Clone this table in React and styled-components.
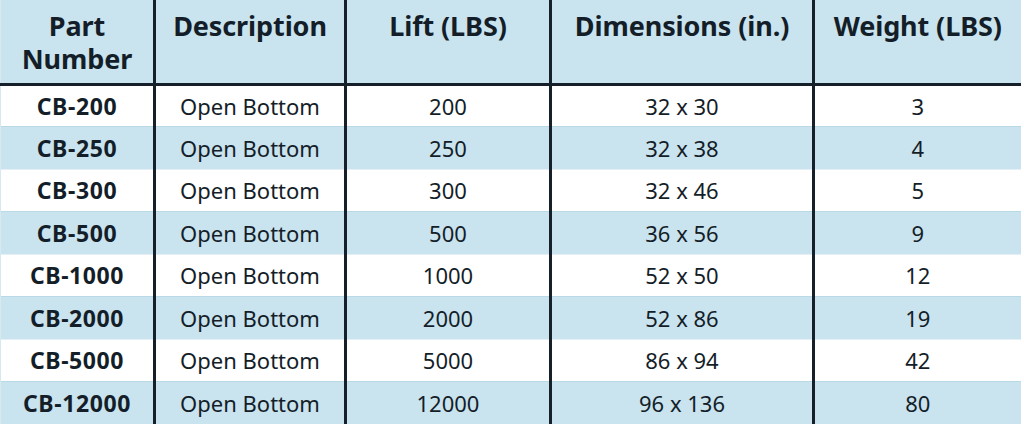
import React from 'react';
import styled, { createGlobalStyle } from 'styled-components';

const GlobalStyle = createGlobalStyle`
    html, body {
        margin: 0;
        padding: 0;
        background: #ffffff;
    }
`;

const Wrapper = styled.div`
    width: 1024px;
    height: 424px;
    overflow: hidden;
    background: #ffffff;
`;

const Table = styled.table`
    width: 1020px;
    border-collapse: collapse;
    table-layout: fixed;
    font-family: "Noto Sans", "Open Sans", sans-serif;
    color: #141e28;
`;

const HeadCell = styled.th`
    height: 84px;
    padding: 9px 2px 0;
    vertical-align: top;
    text-align: center;
    font-size: 27px;
    font-weight: 700;
    line-height: 33px;
    letter-spacing: -0.1px;
    white-space: ${(p) => (p.$wrap ? 'normal' : 'nowrap')};
    background: #c9e3ef;
    border-bottom: 3px solid #16202a;
    border-left: ${(p) => (p.$first ? '1px solid #d8e8ef' : '3px solid #16202a')};
    box-sizing: border-box;
`;

const Row = styled.tr`
    height: 42.5px;
    background: ${(p) => (p.$alt ? '#c9e3ef' : '#ffffff')};
    border-top: 1px solid ${(p) => (p.$alt ? '#b9d9e7' : '#e4f0f5')};
`;

const Cell = styled.td`
    padding: 0 2px;
    text-align: center;
    vertical-align: middle;
    white-space: nowrap;
    font-size: ${(p) => (p.$bold ? '23px' : '22px')};
    font-weight: ${(p) => (p.$bold ? 700 : 400)};
    letter-spacing: ${(p) => (p.$bold ? '0.6px' : '0')};
    border-left: ${(p) => (p.$first ? '1px solid #d8e8ef' : '3px solid #16202a')};
`;

const columns = [
    { title: 'Part Number', width: 154, wrap: true },
    { title: 'Description', width: 191 },
    { title: 'Lift (LBS)', width: 205 },
    { title: 'Dimensions (in.)', width: 263 },
    { title: 'Weight (LBS)', width: 207 },
];

const rows = [
    ['CB-200', 'Open Bottom', '200', '32 x 30', '3'],
    ['CB-250', 'Open Bottom', '250', '32 x 38', '4'],
    ['CB-300', 'Open Bottom', '300', '32 x 46', '5'],
    ['CB-500', 'Open Bottom', '500', '36 x 56', '9'],
    ['CB-1000', 'Open Bottom', '1000', '52 x 50', '12'],
    ['CB-2000', 'Open Bottom', '2000', '52 x 86', '19'],
    ['CB-5000', 'Open Bottom', '5000', '86 x 94', '42'],
    ['CB-12000', 'Open Bottom', '12000', '96 x 136', '80'],
];

export default function App() {
    return (
        <Wrapper>
            <GlobalStyle />
            <Table>
                <colgroup>
                    {columns.map((c, i) => (
                        <col key={i} style={{ width: c.width }} />
                    ))}
                </colgroup>
                <thead>
                    <tr>
                        {columns.map((c, i) => (
                            <HeadCell key={i} $first={i === 0} $wrap={c.wrap}>
                                {c.title}
                            </HeadCell>
                        ))}
                    </tr>
                </thead>
                <tbody>
                    {rows.map((r, i) => (
                        <Row key={i} $alt={i % 2 === 1}>
                            {r.map((v, j) => (
                                <Cell key={j} $first={j === 0} $bold={j === 0}>
                                    {v}
                                </Cell>
                            ))}
                        </Row>
                    ))}
                </tbody>
            </Table>
        </Wrapper>
    );
}
